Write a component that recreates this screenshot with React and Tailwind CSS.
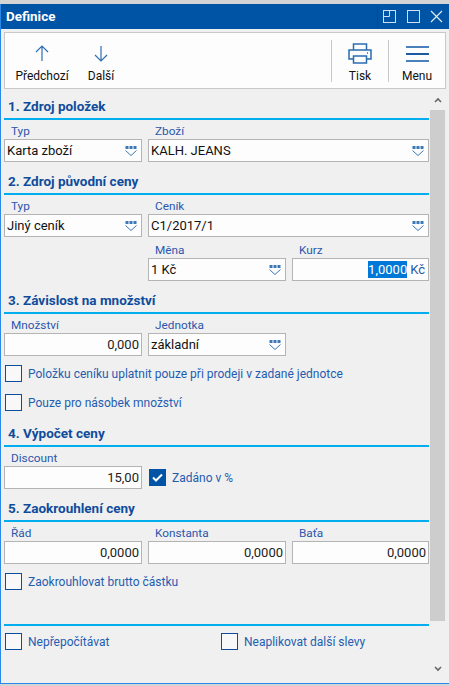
import React from 'react';

const ComboArrow = () => (
  <svg width="12" height="10" viewBox="0 0 12 10" className="shrink-0" fill="none">
    <rect x="0.5" y="0" width="3" height="3" fill="#3a78b8" />
    <rect x="4.5" y="0" width="3" height="3" fill="#3a78b8" />
    <rect x="8.5" y="0" width="3" height="3" fill="#3a78b8" />
    <path d="M0.5 4.5 L6 9.5 L11.5 4.5" stroke="#3a78b8" strokeWidth="1" />
  </svg>
);

const Label = ({ children }) => (
  <div className="h-4 pl-[7px] pt-[1px] text-[11.8px] leading-[15px] text-[#2b57ad]">{children}</div>
);

const Combo = ({ label, value, className = '' }) => (
  <div className={className}>
    <Label>{label}</Label>
    <div className="flex h-[23px] items-center justify-between border border-[#b4b4b4] bg-[#fdfdfd] pl-[2px] pr-[4px] text-[13px] text-[#111]">
      <span className="pt-[1px]">{value}</span>
      <ComboArrow />
    </div>
  </div>
);

const NumberField = ({ label, value }) => (
  <div>
    <Label>{label}</Label>
    <div className="flex h-[23px] items-center justify-end border border-[#b4b4b4] bg-[#fdfdfd] pr-[2px] pt-[1px] text-[13px] text-[#222]">
      {value}
    </div>
  </div>
);

const Heading = ({ children, className = '' }) => (
  <div className={`h-[22px] border-b-2 border-[#00aeef] pl-[4px] text-[13.5px] font-bold leading-[17px] text-[#0f4c9c] ${className}`}>
    {children}
  </div>
);

const Check = ({ label, checked, className = '' }) => (
  <div className={`flex items-center gap-[6px] pl-[1px] ${className}`}>
    {checked ? (
      <span className="flex size-[17px] items-center justify-center bg-[#0054a6]">
        <svg width="11" height="9" viewBox="0 0 11 9" fill="none">
          <path d="M1 4.5 L4 7.5 L10 1.5" stroke="#fff" strokeWidth="2" />
        </svg>
      </span>
    ) : (
      <span className="size-[17px] border border-[#0f4c9c] bg-[#f8f8f8]" />
    )}
    <span className="pt-[1px] text-xs leading-[16px] text-[#1f5db0]">{label}</span>
  </div>
);

const ToolButton = ({ label, icon, className = '' }) => (
  <div className={`flex flex-col items-center self-start pt-[10px] ${className}`}>
    <div className="flex h-[21px] items-center">{icon}</div>
    <span className="mt-[4px] text-xs leading-4 text-[#111]">{label}</span>
  </div>
);

export default function App() {
  return (
    <div className="h-[686px] w-[449px] overflow-hidden bg-[#d4d4d4] pt-[4px] font-['Roboto',sans-serif]">
      <div className="h-[680px] border-b border-l border-[#2b88e8] bg-[#f0f0f0]">
        <div className="flex h-[25px] items-center bg-[#0054a6] pl-[5px] pr-[6px]">
          <span className="pt-[1px] text-[13.4px] font-bold text-white">Definice</span>
          <div className="ml-auto h-[22px] border-l border-[#0a4684]" />
          <svg className="ml-[5px]" width="14" height="13" viewBox="0 0 14 13" fill="none" stroke="#cfe0f2">
            <rect x="0.5" y="0.5" width="12" height="12" />
            <path d="M6.5 1 V6.5 H1" />
          </svg>
          <svg className="ml-[10px]" width="13" height="13" viewBox="0 0 13 13" fill="none" stroke="#cfe0f2">
            <rect x="0.5" y="0.5" width="12" height="12" />
          </svg>
          <svg className="ml-[10px]" width="13" height="13" viewBox="0 0 13 13" fill="none" stroke="#e6eef8" strokeWidth="1.1">
            <path d="M1 1 L12 12 M12 1 L1 12" />
          </svg>
        </div>

        <div className="ml-[3px] mr-[3px] mt-[3px] flex h-[57px] items-center border border-[#c8c8c8] bg-[#fdfdfd]">
          <ToolButton
            label="Předchozí"
            className="w-[74px]"
            icon={
              <svg width="14" height="17" viewBox="0 0 14 17" fill="none" stroke="#2f6fb3" strokeWidth="1.2">
                <path d="M7 16 V1 M1 7 L7 1 L13 7" />
              </svg>
            }
          />
          <ToolButton
            label="Další"
            className="w-[44px]"
            icon={
              <svg width="14" height="17" viewBox="0 0 14 17" fill="none" stroke="#2f6fb3" strokeWidth="1.2">
                <path d="M7 1 V16 M1 10 L7 16 L13 10" />
              </svg>
            }
          />
          <div className="ml-auto h-[42px] border-l border-[#c8c8c8]" />
          <ToolButton
            label="Tisk"
            className="w-[56px]"
            icon={
              <svg width="24" height="21" viewBox="0 0 24 21" fill="none" stroke="#2a6db0" strokeWidth="1.5">
                <path d="M5.5 7 V1 H18.5 V7" />
                <path d="M5 16 H1 V7 H23 V16 H19" />
                <rect x="5.5" y="13" width="13" height="7" />
                <path d="M19 10 H20" />
              </svg>
            }
          />
          <div className="h-[42px] border-l border-[#c8c8c8]" />
          <ToolButton
            label="Menu"
            className="w-[56px]"
            icon={
              <div className="flex w-[23px] flex-col gap-[5px]">
                <div className="h-[2px] bg-[#4a80bb]" />
                <div className="h-[2px] bg-[#1c5ba3]" />
                <div className="h-[2px] bg-[#4a80bb]" />
              </div>
            }
          />
        </div>

        <div className="relative ml-[3px] flex h-[594px]">
          <div className="w-[425px]">
            <Heading className="mt-[9px]">1. Zdroj položek</Heading>
            <div className="mt-[3px] grid grid-cols-[138px_138px_137px] gap-x-[6px]">
              <Combo label="Typ" value="Karta zboží" />
              <Combo label="Zboží" value="KALH. JEANS" className="col-span-2" />
            </div>

            <Heading className="mt-[11px]">2. Zdroj původní ceny</Heading>
            <div className="mt-[3px] grid grid-cols-[138px_138px_137px] gap-x-[6px] gap-y-[5px]">
              <Combo label="Typ" value="Jiný ceník" />
              <Combo label="Ceník" value="C1/2017/1" className="col-span-2" />
              <Combo label="Měna" value="1 Kč" className="col-start-2" />
              <div>
                <Label>Kurz</Label>
                <div className="flex h-[23px] items-center justify-end border border-[#b4b4b4] bg-[#fdfdfd] pr-[3px] text-[13px]">
                  <span className="flex h-[17px] items-center bg-[#0078d7] pt-[1px] text-white">1,0000</span>
                  <span className="ml-[3px] pt-[1px] text-[#2b57ad]">Kč</span>
                </div>
              </div>
            </div>

            <Heading className="mt-[11px]">3. Závislost na množství</Heading>
            <div className="mt-[3px] grid grid-cols-[138px_138px_137px] gap-x-[6px]">
              <NumberField label="Množství" value="0,000" />
              <Combo label="Jednotka" value="základní" />
            </div>
            <Check className="mt-[9px]" label="Položku ceníku uplatnit pouze při prodeji v zadané jednotce" />
            <Check className="mt-[12px]" label="Pouze pro násobek množství" />

            <Heading className="mt-[14px]">4. Výpočet ceny</Heading>
            <div className="mt-[3px] grid grid-cols-[138px_138px_137px] gap-x-[6px]">
              <NumberField label="Discount" value="15,00" />
              <div className="col-span-2 flex items-end pb-[3px]">
                <Check checked label="Zadáno v %" />
              </div>
            </div>

            <Heading className="mt-[11px]">5. Zaokrouhlení ceny</Heading>
            <div className="mt-[3px] grid grid-cols-[138px_138px_137px] gap-x-[6px]">
              <NumberField label="Řád" value="0,0000" />
              <NumberField label="Konstanta" value="0,0000" />
              <NumberField label="Baťa" value="0,0000" />
            </div>
            <Check className="mt-[9px]" label="Zaokrouhlovat brutto částku" />

            <div className="mt-[34px] border-b-2 border-[#00aeef]" />
            <div className="mt-[7px] flex">
              <Check className="w-[216px]" label="Nepřepočítávat" />
              <Check label="Neaplikovat další slevy" />
            </div>
          </div>

          <div className="ml-[1px] flex w-[15px] flex-col items-center">
            <div className="flex h-[21px] items-center justify-center">
              <svg width="8" height="6" viewBox="0 0 8 6" fill="none" stroke="#666" strokeWidth="1.6">
                <path d="M1 5 L4 2 L7 5" />
              </svg>
            </div>
            <div className="h-[511px] w-full bg-[#cdcdcd]" />
            <div className="mt-auto flex h-[21px] items-center justify-center pb-[8px]">
              <svg width="8" height="6" viewBox="0 0 8 6" fill="none" stroke="#666" strokeWidth="1.6">
                <path d="M1 1 L4 4 L7 1" />
              </svg>
            </div>
          </div>
        </div>
      </div>
    </div>
  );
}
